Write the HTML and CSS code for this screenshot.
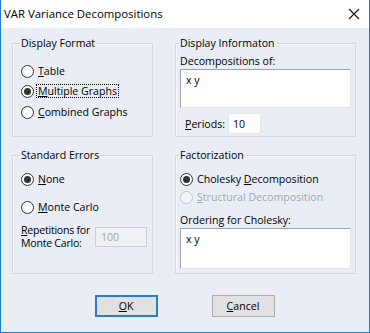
FILE: index.html
```html
<!DOCTYPE html>
<html>
<head>
<meta charset="utf-8">
<link rel="stylesheet" href="styles.css">
</head>
<body>
<div class="window">
  <div class="titlebar">
    <span class="title">VAR Variance Decompositions</span>
    <svg class="close" width="12" height="12" viewBox="0 0 12 12"><path d="M1 1 L11 11 M11 1 L1 11" stroke="#111" stroke-width="1.1" fill="none"/></svg>
  </div>
  <div class="content">
    <div class="grid">
      <div class="group g-left g-top">
        <div class="legend">Display Format</div>
        <div class="radios r-format">
          <div class="radio"><span class="dot"></span><span class="lbl"><u>T</u>able</span></div>
          <div class="radio"><span class="dot on"></span><span class="lbl focus"><u>M</u>ultiple Graphs</span></div>
          <div class="radio"><span class="dot"></span><span class="lbl"><u>C</u>ombined Graphs</span></div>
        </div>
      </div>
      <div class="group g-right g-top">
        <div class="legend">Display Informaton</div>
        <div class="caption c-decomp">Decompositions of:</div>
        <div class="textbox tb-decomp">x y</div>
        <div class="periods">
          <span class="plabel"><u>P</u>eriods:</span>
          <span class="input">10</span>
        </div>
      </div>
      <div class="group g-left g-bottom">
        <div class="legend">Standard Errors</div>
        <div class="radios r-errors">
          <div class="radio"><span class="dot on"></span><span class="lbl"><u>N</u>one</span></div>
          <div class="radio"><span class="dot"></span><span class="lbl"><u>M</u>onte Carlo</span></div>
        </div>
        <div class="reps">
          <span class="replabel"><span class="line"><u>R</u>epetitions for</span><span class="line">Monte Carlo:</span></span>
          <span class="input disabled">100</span>
        </div>
      </div>
      <div class="group g-right g-bottom">
        <div class="legend">Factorization</div>
        <div class="radios r-factor">
          <div class="radio"><span class="dot on"></span><span class="lbl">Cholesky <u>D</u>ecomposition</span></div>
          <div class="radio off"><span class="dot"></span><span class="lbl"><u>S</u>tructural Decomposition</span></div>
        </div>
        <div class="caption c-order">Ordering for Cholesky:</div>
        <div class="textbox tb-order">x y</div>
      </div>
    </div>
    <div class="buttons">
      <button class="btn default"><u>O</u>K</button>
      <button class="btn"><u>C</u>ancel</button>
    </div>
  </div>
</div>
</body>
</html>
```

FILE: styles.css
```css
* { box-sizing: border-box; }
html, body { margin: 0; padding: 0; }
body {
  width: 370px;
  height: 333px;
  overflow: hidden;
  font-family: "Open Sans", "Noto Sans", sans-serif;
  font-size: 10.6px;
  color: #000;
}
.window {
  width: 370px;
  height: 333px;
  background: #e9eef5;
  border-left: 1px solid #1b7fd6;
  border-right: 1px solid #1b7fd6;
  border-bottom: 1px solid #1b7fd6;
  display: flex;
  flex-direction: column;
}
.titlebar {
  height: 28px;
  background: #fff;
  display: flex;
  align-items: center;
  justify-content: space-between;
  padding: 0 9px 2px 3px;
  flex: none;
}
.title {
  font-size: 11.4px;
  color: #000;
}
.close { display: block; margin-top: 1px; }
.content {
  padding: 15px 14px 0 11px;
}
.grid {
  display: grid;
  grid-template-columns: 141px 181px;
  grid-template-rows: 94px 119px;
  column-gap: 22px;
  row-gap: 18px;
}
.group {
  border: 1px solid #d3d9e2;
  box-shadow: inset 1px 1px 0 #f6f8fb;
  display: flex;
  flex-direction: column;
  align-items: flex-start;
}
.g-left { padding: 0 8px; }
.g-right { padding: 0 4px; }
.legend {
  margin-top: -8px;
  height: 15px;
  line-height: 15px;
  padding: 0 1px;
  margin-left: -1px;
  background: #e9eef5;
}
.radios { display: flex; flex-direction: column; }
.radio {
  display: flex;
  align-items: center;
  height: 20px;
}
.r-format { margin-top: 10px; }
.r-format .radio:nth-child(3) { height: 21px; margin-top: 0.5px; }
.r-errors { margin-top: 6px; }
.r-errors .radio + .radio { margin-top: 8px; }
.r-factor { margin-top: 7px; }
.r-factor .radio { height: 18px; }
.dot {
  width: 13px;
  height: 13px;
  border-radius: 50%;
  border: 1px solid #333;
  background: #fff;
  display: flex;
  align-items: center;
  justify-content: center;
  flex: none;
}
.dot.on::after {
  content: "";
  width: 7px;
  height: 7px;
  border-radius: 50%;
  background: #333;
}
.lbl {
  margin-left: 3px;
  padding: 0 1px;
  line-height: 12px;
  white-space: nowrap;
}
.focus { outline: 1px dotted #000; outline-offset: 0; }
.radio.off .dot { border-color: #c8ccd2; background: #f2f4f7; }
.radio.off .lbl { color: #a2a6ad; }
.caption {
  line-height: 15px;
  height: 15px;
}
.c-decomp { margin-top: 3px; }
.c-order { margin-top: 7px; }
.textbox {
  width: 171px;
  background: #fff;
  border: 1px solid;
  border-color: #9da2a8 #e2e5ea #e2e5ea #9da2a8;
  padding: 3px 5px;
  line-height: 14px;
}
.tb-decomp { height: 39px; }
.tb-order { height: 41px; }
.periods {
  display: flex;
  align-items: center;
  margin-top: 5px;
  margin-left: 5px;
}
.plabel { width: 43px; }
.input {
  display: inline-flex;
  align-items: center;
  background: #fff;
  border: 1px solid;
  border-color: #e4e7eb;
  height: 21px;
  width: 33px;
  padding: 0 4px;
}
.reps {
  display: flex;
  align-items: center;
  margin-top: 7px;
}
.replabel {
  width: 74px;
  flex: none;
  display: flex;
  flex-direction: column;
  white-space: nowrap;
  letter-spacing: -0.25px;
}
.replabel .line { display: block; height: 13px; line-height: 13px; overflow: visible; }
.input.disabled {
  width: 52px;
  height: 20px;
  background: #eff1f4;
  border-color: #ccd0d6;
  color: #9ea3aa;
  padding: 0 5px;
  flex: none;
}
.buttons {
  display: flex;
  justify-content: center;
  gap: 54px;
  margin-top: 21px;
  padding-left: 2px;
}
.btn {
  width: 63px;
  height: 22px;
  background: #e1e1e1;
  border: 1px solid #adadad;
  font: inherit;
  color: #000;
  padding: 0;
  line-height: 18px;
}
.btn.default { border: 2px solid #2a79d3; }
```
